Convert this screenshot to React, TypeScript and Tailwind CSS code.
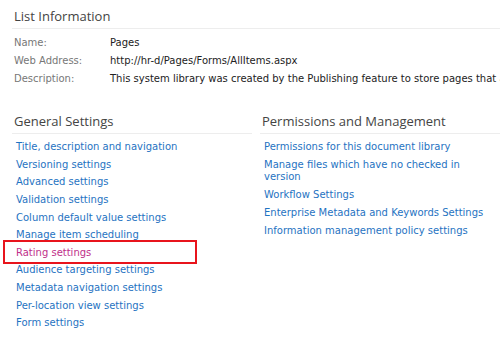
const infoRows = [
  { label: "Name:", value: "Pages" },
  { label: "Web Address:", value: "http://hr-d/Pages/Forms/AllItems.aspx" },
  {
    label: "Description:",
    value:
      "This system library was created by the Publishing feature to store pages that are created in this site.",
  },
];

const generalLinks = [
  "Title, description and navigation",
  "Versioning settings",
  "Advanced settings",
  "Validation settings",
  "Column default value settings",
  "Manage item scheduling",
  "Rating settings",
  "Audience targeting settings",
  "Metadata navigation settings",
  "Per-location view settings",
  "Form settings",
];

const permissionLinks = [
  "Permissions for this document library",
  "Manage files which have no checked in version",
  "Workflow Settings",
  "Enterprise Metadata and Keywords Settings",
  "Information management policy settings",
];

const SectionTitle = ({ children }: { children: string }) => (
  <div className="border-b border-[#ededed] pb-[3px] pl-[2px] font-['Open_Sans',sans-serif] text-[13px] leading-[18px] text-[#444]">
    {children}
  </div>
);

const App = () => {
  return (
    <div className="h-[340px] w-[500px] overflow-hidden bg-white font-['DejaVu_Sans',Verdana,sans-serif] text-[10px]">
      {/* List information */}
      <div className="pl-[12px] pt-[7px]">
        <SectionTitle>List Information</SectionTitle>
        <div className="mt-[4px] flex flex-col">
          {infoRows.map((row) => (
            <div key={row.label} className="flex h-[18px] items-center pl-[2px]">
              <div className="w-[96px] shrink-0 text-[#777]">{row.label}</div>
              <div className="whitespace-nowrap text-[#222]">{row.value}</div>
            </div>
          ))}
        </div>
      </div>

      {/* Settings columns */}
      <div className="mt-[25px] flex pl-[12px]">
        <div className="w-[240px] shrink-0">
          <SectionTitle>General Settings</SectionTitle>
          <div className="mt-[4px] flex flex-col pl-[4px]">
            {generalLinks.map((link) =>
              link === "Rating settings" ? (
                <div key={link} className="relative flex h-[17.6px] items-center text-[#c0308a]">
                  {link}
                  {/* highlight box */}
                  <div className="absolute -top-[4px] -bottom-[3px] -left-[13px] w-[194px] border-2 border-[#e8141c]" />
                </div>
              ) : (
                <div key={link} className="flex h-[17.6px] items-center text-[#1f73c2]">
                  {link}
                </div>
              )
            )}
          </div>
        </div>
        <div className="ml-[8px] flex-1">
          <SectionTitle>Permissions and Management</SectionTitle>
          <div className="mt-[4px] flex flex-col pl-[4px] pr-[10px]">
            {permissionLinks.map((link) => (
              <div key={link} className="py-[2.75px] leading-[12.5px] text-[#1f73c2]">
                {link}
              </div>
            ))}
          </div>
        </div>
      </div>
    </div>
  );
};

export default App;
